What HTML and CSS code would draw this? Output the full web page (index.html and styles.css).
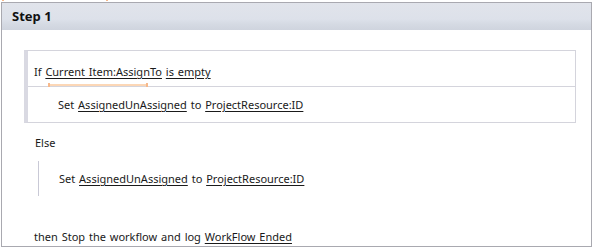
FILE: index.html
```html
<!doctype html>
<html lang="en">
  <head>
    <meta charset="UTF-8" />
    <title>Workflow Step 1</title>
    <link rel="stylesheet" href="styles.css">
  </head>
  <body>
    <div class="sel-ticks"><span></span><span></span></div>
    <div class="step">
      <div class="step-header">Step 1</div>
      <div class="step-body">
        <div class="cond-block">
          <div class="row row-if">
            If <a class="field field-sel" href="#">Current Item:AssignTo</a> <a class="field" href="#">is empty</a>
          </div>
          <div class="row row-action">
            Set <a class="field" href="#">AssignedUnAssigned</a> to <a class="field" href="#">ProjectResource:ID</a>
          </div>
        </div>
        <div class="else-label">Else</div>
        <div class="else-branch">
          Set <a class="field" href="#">AssignedUnAssigned</a> to <a class="field" href="#">ProjectResource:ID</a>
        </div>
        <div class="then-line">
          then Stop the workflow and log <a class="field" href="#">WorkFlow Ended</a>
        </div>
      </div>
    </div>
  </body>
</html>
```

FILE: styles.css
```css
body {
  font-family: 'Noto Sans', 'Open Sans', sans-serif;
  font-size: 11px;
  word-spacing: 1px;
  color: #1a1a1a;
  margin: 0;
  background-color: #fff;
  position: relative;
}

/* selection marks cut off at the top edge */
.sel-ticks {
  position: absolute;
  top: 0;
  left: 2px;
  width: 106px;
  height: 1px;
  display: flex;
  justify-content: space-between;
}
.sel-ticks span {
  width: 2px;
  height: 1px;
  background-color: #f6b98c;
}

.step {
  margin: 2px 0 0 1px;
  width: 589px;
  height: 243px;
  border: 1px solid #a9a9b0;
  box-sizing: content-box;
}

.step-header {
  height: 27px;
  line-height: 27px;
  padding-left: 10px;
  font-weight: bold;
  font-size: 13px;
  word-spacing: 0;
  color: #111;
  background: linear-gradient(#e1e4eb, #dde1ea 60%, #d6dbe4 75%, #cfd4de);
}

.step-body {
  padding: 20px 14px 0 22px;
}

.cond-block {
  width: 547px;
  border: 1px solid #d4d4dc;
  border-left: 4px solid #d9d9e2;
}

.row {
  height: 35px;
  line-height: 17px;
  box-sizing: border-box;
}
.row-if {
  height: 36px;
  padding-left: 6px;
  padding-top: 12px;
  border-bottom: 1px solid #d4d4dc;
}
.row-action {
  padding-left: 30px;
  padding-top: 9px;
}

.field {
  color: #1a1a1a;
  text-decoration: underline;
  text-underline-offset: 2px;
}

.field-sel {
  position: relative;
}
.field-sel::after {
  content: '';
  position: absolute;
  left: 3px;
  top: 19px;
  width: 96px;
  height: 4px;
  background: linear-gradient(transparent 1px, #fcd7b6 1px, #fcd7b6 3px, transparent 3px);
  border-left: 2px solid #f6b98c;
  border-right: 2px solid #f6b98c;
}

.else-label {
  margin-top: 11px;
  padding-left: 11px;
  line-height: 17px;
}

.else-branch {
  margin: 10px 0 0 14px;
  height: 35px;
  padding: 9px 0 0 20px;
  line-height: 17px;
  box-sizing: border-box;
  border-left: 1px solid #c9c9d6;
}

.then-line {
  margin-top: 32px;
  padding-left: 10px;
  line-height: 17px;
}
```
